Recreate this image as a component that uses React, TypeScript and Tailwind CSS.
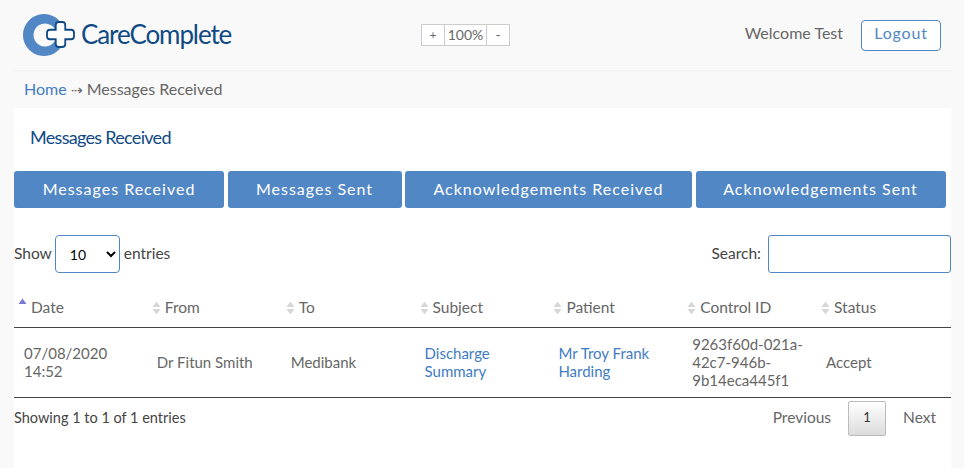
const font = "font-['Lato','Open_Sans',sans-serif]";

const SortIcon = ({ active }: { active?: boolean }) => (
  <svg width="9" height="16" viewBox="0 0 9 16" className="shrink-0">
    <path d="M4.5 1.5 L8.5 7 L0.5 7 Z" fill={active ? "#7b7bd6" : "#d6d6d6"} />
    {!active && <path d="M4.5 14.5 L8.5 9 L0.5 9 Z" fill="#d6d6d6" />}
  </svg>
);

const Logo = () => (
  <svg width="52" height="42" viewBox="0 0 52 42" className="shrink-0">
    <path
      fillRule="evenodd"
      d="M21 0 a21 21 0 1 0 0.01 0 Z M22 9.5 a11.5 11.5 0 1 1 -0.01 0 Z"
      fill="#5287c6"
    />
    <path
      d="M32.75 11 a3 3 0 0 1 3 -3 h3.5 a3 3 0 0 1 3 3 v4.75 h5.75 a3 3 0 0 1 3 3 v3.5 a3 3 0 0 1 -3 3 h-5.75 v4.75 a3 3 0 0 1 -3 3 h-3.5 a3 3 0 0 1 -3 -3 v-4.75 h-5.75 a3 3 0 0 1 -3 -3 v-3.5 a3 3 0 0 1 3 -3 h5.75 Z"
      fill="#ffffff"
      stroke="#0f4a85"
      strokeWidth="1.8"
    />
  </svg>
);

const tabs = [
  { label: "Messages Received", w: "w-[210px]" },
  { label: "Messages Sent", w: "w-[174px]" },
  { label: "Acknowledgements Received", w: "w-[287px]" },
  { label: "Acknowledgements Sent", w: "w-[250px]" },
];

const columns = ["Date", "From", "To", "Subject", "Patient", "Control ID", "Status"];

export default function App() {
  return (
    <div className={`${font} h-[468px] w-[964px] overflow-hidden bg-[#f9f9f9] text-[16px] text-[#666666]`}>
      <div className="mr-[13px] ml-[14px]">
        <header className="flex h-[71px] items-center border-b border-[#f1f1f1]">
          <div className="ml-[9px] flex w-[398px] items-center">
            <Logo />
            <span className="-mt-[2px] ml-[6px] text-[26px] tracking-[-1.1px] text-[#0f4a85]">CareComplete</span>
          </div>
          <div className="flex h-[22px] border border-[#cccccc] bg-white text-[14px] leading-[20px]">
            <button className="w-[22px] text-center text-[12px]">+</button>
            <span className="w-[43px] border-x border-[#cccccc] text-center">100%</span>
            <button className="w-[22px] text-center text-[14px]">-</button>
          </div>
          <span className="-mt-[4px] ml-auto">Welcome Test</span>
          <button className="mr-[10px] ml-[18px] h-[31px] w-[80px] rounded-[4px] border border-[#5287c6] bg-white pb-[4px] text-[16px] tracking-[0.8px] text-[#5287c6]">
            Logout
          </button>
        </header>
        <nav className="flex h-[36px] items-center pl-[10px]">
          <a className="text-[#3f7cc4]" href="#">Home</a>
          <span className="mx-[4px] text-[14px]">⇢</span>
          <span>Messages Received</span>
        </nav>
        <main className="mt-[1px] h-[360px] bg-white">
          <h1 className="pt-[18px] pl-[16px] text-[18px] leading-[22px] tracking-[-0.7px] text-[#0f4a85]">
            Messages Received
          </h1>
          <div className="mt-[23px] flex gap-[3.5px]">
            {tabs.map((t) => (
              <button
                key={t.label}
                className={`${t.w} h-[37px] rounded-[3px] bg-[#5287c6] pb-[2px] text-[16px] tracking-[1px] text-white`}
              >
                {t.label}
              </button>
            ))}
          </div>
          <div className="mt-[27px] flex h-[38px] items-center text-[15.5px] text-[#444444]">
            <span>Show</span>
            <select className="mr-[4px] ml-[3px] h-[38px] w-[65px] rounded-[4px] border border-[#5287c6] bg-white pl-[10px] text-[14px] text-black">
              <option>10</option>
            </select>
            <span>entries</span>
            <span className="ml-auto">Search:</span>
            <input className="ml-[7px] h-[38px] w-[183px] rounded-[3px] border border-[#5287c6] bg-white" />
          </div>
          <table className="mt-[16px] w-full table-fixed border-collapse">
            <thead>
              <tr className="h-[38px] border-b border-[#444444] text-[15.5px]">
                {columns.map((c, i) => (
                  <th key={c} className="pl-[4px] text-left font-normal">
                    <span className="flex items-center gap-[4px]">
                      <span className={i === 0 ? "-mt-[6px]" : ""}>
                        <SortIcon active={i === 0} />
                      </span>
                      {c}
                    </span>
                  </th>
                ))}
              </tr>
            </thead>
            <tbody>
              <tr className="h-[70px] border-b border-[#444444] text-[15px] leading-[18px]">
                <td className="px-[10px]">07/08/2020 14:52</td>
                <td className="px-[9px]">Dr Fitun Smith</td>
                <td className="px-[9px]">Medibank</td>
                <td className="px-[9px]"><a className="text-[#3f7cc4]" href="#">Discharge Summary</a></td>
                <td className="px-[9px]"><a className="text-[#3f7cc4]" href="#">Mr Troy Frank Harding</a></td>
                <td className="pl-[9px] break-words">9263f60d-021a-42c7-946b-9b14eca445f1</td>
                <td className="px-[9px]">Accept</td>
              </tr>
            </tbody>
          </table>
          <div className="mt-[3px] flex items-center text-[14.5px] text-[#444444]">
            <span className="-mt-[1px]">Showing 1 to 1 of 1 entries</span>
            <span className="ml-auto text-[15.5px] text-[#666666]">Previous</span>
            <button className="mx-[17px] h-[35px] w-[38px] rounded-[2px] border border-[#bbbbbb] bg-gradient-to-b from-white to-[#dcdcdc] text-[13px] text-[#333333]">
              1
            </button>
            <span className="mr-[15px] text-[15.5px] text-[#666666]">Next</span>
          </div>
        </main>
      </div>
    </div>
  );
}
